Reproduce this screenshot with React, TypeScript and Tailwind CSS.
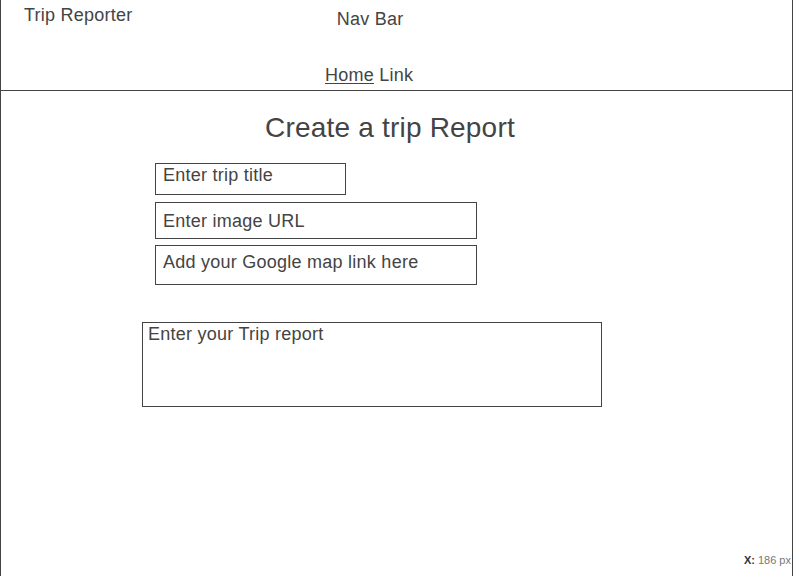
export default function App() {
  return (
    <div
      className="relative h-[576px] w-[793px] overflow-hidden border-x border-[#444] bg-white text-[#444]"
      style={{ fontFamily: '"Liberation Sans", Arial, sans-serif' }}
    >
      {/* header / nav */}
      <header className="flex h-[91px] border-b border-[#444] text-[18px] leading-[21px] tracking-[0.25px]">
        <div className="w-[324px] shrink-0 pl-[23px] pt-[5px]">Trip Reporter</div>
        <div className="flex flex-col items-center pt-[9px]">
          <span className="pl-[2px]">Nav Bar</span>
          <span className="mt-[35px]">
            <span className="underline underline-offset-2">Home</span> Link
          </span>
        </div>
      </header>

      <main className="text-[18px] leading-[21px] tracking-[0.25px]">
        <h1 className="ml-[264px] mt-[21px] text-[28px] leading-[32px] tracking-[0.2px]">Create a trip Report</h1>

        <div className="ml-[154px] mt-[19px] flex flex-col">
          <div className="h-[32px] w-[191px] border border-[#444] pl-[7px] pt-[1px]">Enter trip title</div>
          <div className="mt-[7px] h-[37px] w-[322px] border border-[#444] pl-[7px] pt-[8px]">Enter image URL</div>
          <div className="mt-[6px] h-[40px] w-[322px] border border-[#444] pl-[7px] pt-[6px]">
            Add your Google map link here
          </div>
        </div>

        <div className="ml-[141px] mt-[37px] h-[85px] w-[460px] border border-[#444] pl-[5px] pt-[1px]">
          Enter your Trip report
        </div>
      </main>

      <div className="absolute bottom-[9px] right-[1px] text-[11px] leading-[14px] text-[#777]">
        <span className="font-bold text-[#333]">X:</span> 186 px
      </div>
    </div>
  );
}
